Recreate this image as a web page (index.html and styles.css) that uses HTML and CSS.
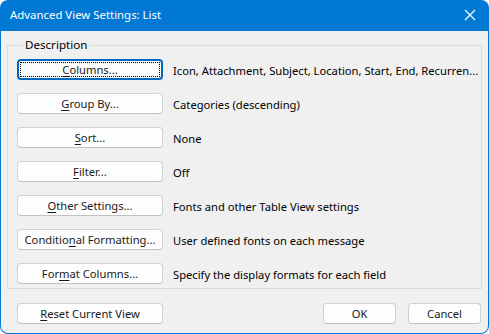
FILE: index.html
```html
<!DOCTYPE html>
<html>
<head>
<meta charset="utf-8">
<link rel="stylesheet" href="styles.css">
</head>
<body>
<div class="window">
  <div class="titlebar">
    <span class="title">Advanced View Settings: List</span>
    <svg class="close" width="12" height="12" viewBox="0 0 12 12"><path d="M1 1 L11 11 M11 1 L1 11" stroke="#fff" stroke-width="1.2" fill="none"/></svg>
  </div>
  <div class="body">
    <fieldset class="group">
      <legend>Description</legend>
      <div class="rows">
        <button class="btn focused"><u>C</u>olumns...</button>
        <span class="desc">Icon, Attachment, Subject, Location, Start, End, Recurren...</span>
        <button class="btn"><u>G</u>roup By...</button>
        <span class="desc">Categories (descending)</span>
        <button class="btn"><u>S</u>ort...</button>
        <span class="desc">None</span>
        <button class="btn"><u>F</u>ilter...</button>
        <span class="desc">Off</span>
        <button class="btn"><u>O</u>ther Settings...</button>
        <span class="desc">Fonts and other Table View settings</span>
        <button class="btn">Conditio<u>n</u>al Formatting...</button>
        <span class="desc">User defined fonts on each message</span>
        <button class="btn">For<u>m</u>at Columns...</button>
        <span class="desc">Specify the display formats for each field</span>
      </div>
    </fieldset>
    <div class="footer">
      <button class="btn reset"><u>R</u>eset Current View</button>
      <div class="spacer"></div>
      <button class="btn small">OK</button>
      <button class="btn small">Cancel</button>
    </div>
  </div>
</div>
</body>
</html>
```
FILE: styles.css
```css
html, body {
  margin: 0;
  padding: 0;
  background: #ffffff;
}
body {
  font-family: "Noto Sans", "Open Sans", sans-serif;
  font-size: 11.2px;
  color: #000;
}
.window {
  width: 489px;
  height: 334px;
  box-sizing: border-box;
  background: #0078d4;
  border-radius: 8px;
  display: flex;
  flex-direction: column;
  overflow: hidden;
}
.titlebar {
  height: 31px;
  flex: none;
  display: flex;
  align-items: center;
  padding: 0 12px 0 10px;
  color: #fff;
}
.title {
  flex: 1;
  font-size: 11.4px;
  position: relative;
  top: -1px;
}
.close {
  display: block;
  margin-right: 1px;
  position: relative;
  top: -1px;
}
.body {
  flex: 1;
  margin: 0 1px 1px 1px;
  background: #f0f0f0;
  border-radius: 0 0 7px 7px;
  padding: 6px 6px 0 6px;
  display: flex;
  flex-direction: column;
}
.group {
  margin: 0;
  border: 1px solid #dcdcdc;
  padding: 6px 9px 4px 9px;
  min-width: 0;
}
.group legend {
  padding: 0 2px;
  margin-left: 6px;
  line-height: 16px;
  font-size: 11.6px;
}
.rows {
  display: grid;
  grid-template-columns: 146px 1fr;
  column-gap: 10px;
  row-gap: 13px;
  align-items: center;
}
.btn {
  font-family: inherit;
  font-size: 11.2px;
  height: 21px;
  box-sizing: border-box;
  background: #fdfdfd;
  border: 1px solid #d0d0d0;
  border-bottom-color: #c2c2c2;
  border-radius: 4px;
  padding: 0;
  color: #1a1a1a;
  position: relative;
  line-height: 18px;
}
.btn u {
  text-underline-offset: 2px;
}
.focused {
  border: 2px solid #0067c0;
}
.focused::after {
  content: "";
  position: absolute;
  left: 1px;
  right: 1px;
  top: 1px;
  bottom: 1px;
  border: 1px dotted #000;
}
.desc {
  white-space: nowrap;
  color: #000;
  position: relative;
  top: 1px;
}
.footer {
  display: flex;
  align-items: center;
  margin-top: 14px;
  padding: 0 1px 0 10px;
  gap: 12px;
}
.reset {
  width: 146px;
}
.spacer {
  flex: 1;
}
.small {
  width: 73px;
}
```
